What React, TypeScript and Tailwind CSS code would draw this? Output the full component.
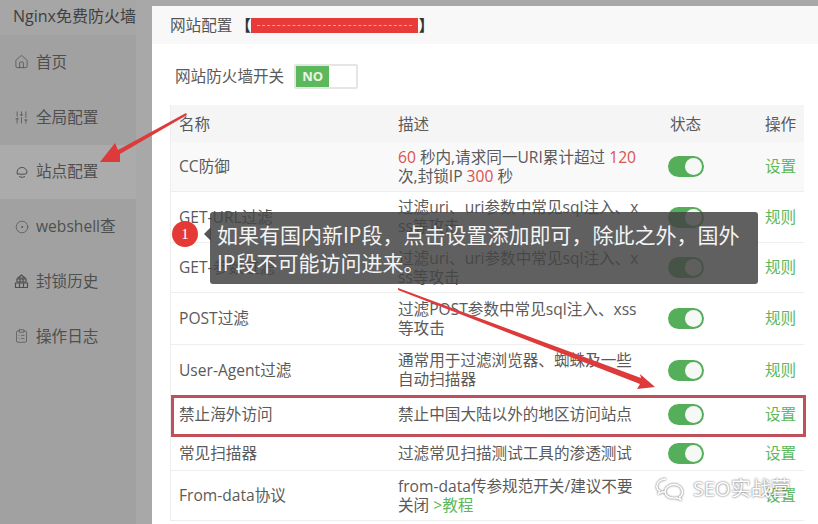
import { ClipboardList, CircleDot, House, SlidersVertical } from 'lucide-react';
import type { ReactNode } from 'react';

const FONT = '"Open Sans", "Noto Sans CJK SC", sans-serif';

function StationIcon() {
  return (
    <svg width="14" height="14" viewBox="0 0 14 14" fill="none" stroke="currentColor" strokeWidth="1">
      <path d="M2.500 9.500A5 5 0 1 1 12 8" />
      <path d="M2 8.500c2 1 8 1 10 0" />
      <path d="M4 11.500c2 1 4 1 6 0" />
    </svg>
  );
}

function BlockIcon() {
  return (
    <svg width="15" height="15" viewBox="0 0 15 15" fill="none" stroke="currentColor" strokeWidth="1.2">
      <path d="M7.500 1 4 4h7z" />
      <path d="M3 5h9v3H3z" />
      <path d="M1.500 9h12v4.500h-12z" />
      <path d="M5.500 9v4.500M9.500 9v4.500M6 5v3M9 5v3" />
    </svg>
  );
}

const navItems: { label: string; icon: ReactNode; active?: boolean }[] = [
  { label: '首页', icon: <House size={16} strokeWidth={1.2} /> },
  { label: '全局配置', icon: <SlidersVertical size={15} strokeWidth={1.2} /> },
  { label: '站点配置', icon: <StationIcon />, active: true },
  { label: 'webshell查', icon: <CircleDot size={14} strokeWidth={1.2} /> },
  { label: '封锁历史', icon: <BlockIcon /> },
  { label: '操作日志', icon: <ClipboardList size={16} strokeWidth={1.1} /> },
];

const Red = ({ children }: { children: ReactNode }) => <span className="text-[#d9534f]">{children}</span>;

const rows: { name: string; desc: ReactNode; action: string; h: string; bg?: string; noToggle?: boolean }[] = [
  {
    name: 'CC防御',
    desc: (
      <>
        <Red>60</Red> 秒内,请求同一URI累计超过 <Red>120</Red> 次,封锁IP <Red>300</Red> 秒
      </>
    ),
    action: '设置',
    h: 'h-[50px]',
    bg: 'bg-[#f9f9f9]',
  },
  { name: 'GET-URL过滤', desc: '过滤uri、uri参数中常见sql注入、xss等攻击', action: '规则', h: 'h-[51px]' },
  { name: 'GET-参数过滤', desc: '过滤uri、uri参数中常见sql注入、xss等攻击', action: '规则', h: 'h-[50px]' },
  { name: 'POST过滤', desc: '过滤POST参数中常见sql注入、xss等攻击', action: '规则', h: 'h-[52px]' },
  { name: 'User-Agent过滤', desc: '通常用于过滤浏览器、蜘蛛及一些自动扫描器', action: '规则', h: 'h-[51px]' },
  { name: '禁止海外访问', desc: '禁止中国大陆以外的地区访问站点', action: '设置', h: 'h-[41px] pb-[3px]' },
  { name: '常见扫描器', desc: '过滤常见扫描测试工具的渗透测试', action: '设置', h: 'h-[34px]' },
  {
    name: 'From-data协议',
    desc: (
      <>
        from-data传参规范开关/建议不要关闭 <span className="text-[#5cb85c]">&gt;教程</span>
      </>
    ),
    action: '设置',
    h: 'h-[50px]',
    noToggle: true,
  },
];

function Toggle() {
  return (
    <div className="flex h-[21px] w-[36px] justify-end rounded-full bg-[#55ae5a] p-[2px]">
      <div className="h-[17px] w-[17px] rounded-full bg-[#f6f8f5]" />
    </div>
  );
}

export default function App() {
  return (
    <div
      className="relative flex h-[524px] w-[818px] overflow-hidden bg-[#a8a8a8] text-[15.6px] leading-[19px] text-[#5a5a5a]"
      style={{ fontFamily: FONT }}
    >
      <aside className="flex w-[136px] shrink-0 flex-col bg-[#a1a1a1] text-[#4f4f4f]">
        <div className="flex h-[35px] items-center whitespace-nowrap bg-[#a6a6a6] pb-[2px] pl-[13px] text-[16px] text-[#3f3f3f]">
          Nginx免费防火墙
        </div>
        {navItems.map((item) => (
          <div
            key={item.label}
            className={`flex h-[54.8px] items-center gap-[7px] pl-[14px] ${item.active ? 'bg-[#ababab]' : ''}`}
          >
            <span className="flex w-[15px] justify-center">{item.icon}</span>
            <span>{item.label}</span>
          </div>
        ))}
      </aside>
      <div className="w-[16px] shrink-0 bg-[#a8a8a8]" />

      <main className="mt-[6px] min-w-0 flex-1 bg-white">
        <header className="flex h-[38px] items-center bg-[#f8f8f8] pl-[18px] text-[#555]">
          网站配置
          <span className="ml-[3px] w-[16px] font-bold text-[#333]">【</span>
          <span className="flex h-[15px] w-[167px] items-center bg-[#e93a3a] px-[6px]">
            <span className="w-full border-t border-dashed border-[#f7a0a0]" />
          </span>
          <span className="font-bold text-[#333]">】</span>
        </header>

        <div className="flex h-[61px] items-center gap-[10px] pl-[23px] pt-[4px]">
          <span>网站防火墙开关</span>
          <div className="flex h-[25px] w-[64px] rounded-[2px] border-2 border-[#e3e6e3] bg-white">
            <div className="flex w-[33px] items-center justify-center bg-[#5cb85c] text-[13px] font-bold text-[#e8f5e8]">
              NO
            </div>
          </div>
        </div>

        <div className="ml-[18px] w-[634px] border-l border-[#eeeeee]">
          <div className="grid h-[37px] grid-cols-[219px_271px_95px_49px] items-center bg-[#f5f5f5] pt-[2px]">
            <span className="pl-[8px]">名称</span>
            <span className="pl-[8px]">描述</span>
            <span className="pl-[9px]">状态</span>
            <span className="pl-[9px]">操作</span>
          </div>
          {rows.map((row) => (
            <div
              key={row.name}
              className={`grid grid-cols-[219px_271px_95px_49px] items-center border-b border-[#eeeeee] ${row.h} ${row.bg ?? ''}`}
            >
              <span className="pl-[8px]">{row.name}</span>
              <span className="break-all pl-[8px] pr-[17px]">{row.desc}</span>
              <span className="pl-[7px]">{!row.noToggle && <Toggle />}</span>
              <span className="pl-[9px] text-[#5cb85c]">{row.action}</span>
            </div>
          ))}
        </div>
      </main>

      {/* red annotations drawn on top of the screenshot */}
      <svg className="absolute left-0 top-0" width="818" height="524" viewBox="0 0 818 524" fill="#dd3b3b">
        <polygon points="186,113 118,150 115,143 100,162 120,162 120,154 187,115" />
        <polygon points="398,288 641,378 640,374 655,387 637,389 640,384 398,290" />
      </svg>
      <div className="absolute left-[171px] top-[395px] h-[42px] w-[635px] border-[3px] border-[#c0505a]" />

      {/* tooltip */}
      <div className="absolute left-[172px] top-[221px] flex h-[26px] w-[26px] items-center justify-center rounded-full bg-[#e53935] font-['Liberation_Serif'] text-[15px] text-white">
        1
      </div>
      <div className="absolute left-[204px] top-[227px] h-0 w-0 border-y-[7px] border-r-[7px] border-y-transparent border-r-[#555555]" />
      <div className="absolute left-[210px] top-[212px] h-[72px] w-[548px] rounded-[3px] bg-[#444444]/85 px-[7px] pt-[9px] text-[21px] leading-[28px] text-[#f4f4f4]">
        如果有国内新IP段，点击设置添加即可，除此之外，国外IP段不可能访问进来。
      </div>

      {/* watermark */}
      <div className="absolute left-[655px] top-[477px] flex items-center gap-[7px] text-[20px] leading-[24px] text-white [text-shadow:0_0_2px_#444]">
        <svg
          className="drop-shadow-[0_0_1px_#555]"
          width="31"
          height="24"
          viewBox="0 0 34 26"
          fill="none"
          stroke="#fff"
          strokeWidth="1.6"
        >
          <path d="M12 2C6 2 2 6 2 10c0 2 1 4 3 5l-1 3 4-2c1 .3 2 .4 3 .4" />
          <path d="M21 8c-6 0-10 4-10 8s4 7 10 7c1 0 2 0 3-.4l4 2-1-3c2-1 3-3.500 3-5.600 0-4-4-8-9-8z" />
        </svg>
        <span className="whitespace-nowrap">SEO实战营</span>
      </div>
    </div>
  );
}
